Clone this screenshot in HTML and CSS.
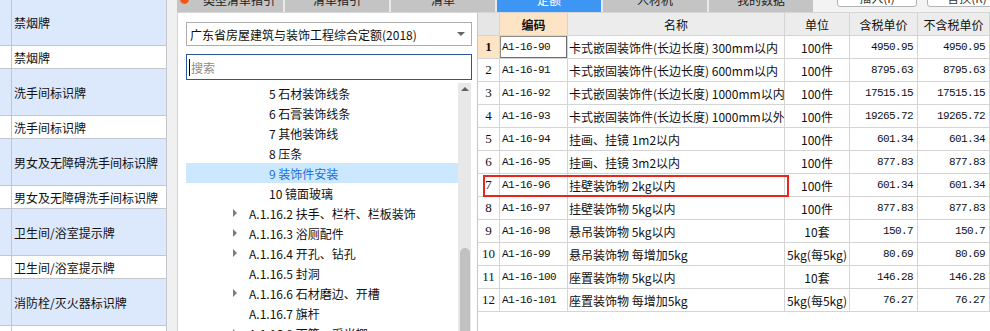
FILE: index.html
```html
<!DOCTYPE html>
<html lang="zh-CN">
<head>
  <meta charset="UTF-8" />
  <title>定额库</title>
  <link rel="stylesheet" href="styles.css">
</head>
<body>
<div class="app">

  <aside class="side">
    <div class="srow tall"><span class="sidx"></span><span class="stxt">禁烟牌</span></div>
    <div class="srow short"><span class="sidx"></span><span class="stxt">禁烟牌</span></div>
    <div class="srow tall"><span class="sidx"></span><span class="stxt">洗手间标识牌</span></div>
    <div class="srow short"><span class="sidx"></span><span class="stxt">洗手间标识牌</span></div>
    <div class="srow tall"><span class="sidx"></span><span class="stxt">男女及无障碍洗手间标识牌</span></div>
    <div class="srow short"><span class="sidx"></span><span class="stxt">男女及无障碍洗手间标识牌</span></div>
    <div class="srow tall"><span class="sidx"></span><span class="stxt">卫生间/浴室提示牌</span></div>
    <div class="srow short"><span class="sidx"></span><span class="stxt">卫生间/浴室提示牌</span></div>
    <div class="srow tall"><span class="sidx"></span><span class="stxt">消防栓/灭火器标识牌</span></div>
    <div class="srow short"><span class="sidx"></span><span class="stxt"></span></div>
  </aside>

  <div class="gutter"></div>

  <main class="main">
    <div class="tabbar">
      <div class="strip">
        <div class="tabs">
          <div class="tab first"><i class="dot"></i>类型清单指引</div>
          <div class="tab">清单指引</div>
          <div class="tab">清单</div>
          <div class="tab on">定额</div>
          <div class="tab">人材机</div>
          <div class="tab">我的数据</div>
        </div>
        <div class="tools">
          <button>插入(I)</button>
          <button>替换(R)</button>
        </div>
      </div>
    </div>

    <div class="body">
      <!-- 定额库 + 章节树 -->
      <section class="lib">
        <div class="select">
          <span>广东省房屋建筑与装饰工程综合定额(2018)</span>
          <i class="caret-down"></i>
        </div>
        <div class="search"><i class="cursor"></i>搜索</div>
        <div class="tree">
          <div class="nodes">
            <div class="node l3">5 石材装饰线条</div>
            <div class="node l3">6 石膏装饰线条</div>
            <div class="node l3">7 其他装饰线</div>
            <div class="node l3">8 压条</div>
            <div class="node l3 sel">9 装饰件安装</div>
            <div class="node l3">10 镜面玻璃</div>
            <div class="node l2"><i class="tri has"></i>A.1.16.2 扶手、栏杆、栏板装饰</div>
            <div class="node l2"><i class="tri has"></i>A.1.16.3 浴厕配件</div>
            <div class="node l2"><i class="tri has"></i>A.1.16.4 开孔、钻孔</div>
            <div class="node l2"><i class="tri"></i>A.1.16.5 封洞</div>
            <div class="node l2"><i class="tri has"></i>A.1.16.6 石材磨边、开槽</div>
            <div class="node l2"><i class="tri"></i>A.1.16.7 旗杆</div>
            <div class="node l2"><i class="tri has"></i>A.1.16.8 雨篷、采光棚</div>
          </div>
          <div class="scroll">
            <i class="up"></i>
            <i class="thumb"></i>
          </div>
        </div>
      </section>

      <!-- 定额子目表 -->
      <section class="grid">
        <div class="row head">
          <div class="num"></div><div class="c">编码</div><div class="n">名称</div><div class="u">单位</div><div class="p">含税单价</div><div class="p">不含税单价</div>
        </div>
        <div class="row cur">
          <div class="num">1</div><div class="c">A1-16-90</div><div class="n">卡式嵌固装饰件(长边长度) 300mm以内</div><div class="u">100件</div><div class="p">4950.95</div><div class="p">4950.95</div>
        </div>
        <div class="row">
          <div class="num">2</div><div class="c">A1-16-91</div><div class="n">卡式嵌固装饰件(长边长度) 600mm以内</div><div class="u">100件</div><div class="p">8795.63</div><div class="p">8795.63</div>
        </div>
        <div class="row">
          <div class="num">3</div><div class="c">A1-16-92</div><div class="n">卡式嵌固装饰件(长边长度) 1000mm以内</div><div class="u">100件</div><div class="p">17515.15</div><div class="p">17515.15</div>
        </div>
        <div class="row">
          <div class="num">4</div><div class="c">A1-16-93</div><div class="n">卡式嵌固装饰件(长边长度) 1000mm以外</div><div class="u">100件</div><div class="p">19265.72</div><div class="p">19265.72</div>
        </div>
        <div class="row">
          <div class="num">5</div><div class="c">A1-16-94</div><div class="n">挂画、挂镜 1m2以内</div><div class="u">100件</div><div class="p">601.34</div><div class="p">601.34</div>
        </div>
        <div class="row">
          <div class="num">6</div><div class="c">A1-16-95</div><div class="n">挂画、挂镜 3m2以内</div><div class="u">100件</div><div class="p">877.83</div><div class="p">877.83</div>
        </div>
        <div class="row">
          <div class="num">7</div><div class="c">A1-16-96</div><div class="n">挂壁装饰物 2kg以内</div><div class="u">100件</div><div class="p">601.34</div><div class="p">601.34</div>
        </div>
        <div class="row">
          <div class="num">8</div><div class="c">A1-16-97</div><div class="n">挂壁装饰物 5kg以内</div><div class="u">100件</div><div class="p">877.83</div><div class="p">877.83</div>
        </div>
        <div class="row">
          <div class="num">9</div><div class="c">A1-16-98</div><div class="n">悬吊装饰物 5kg以内</div><div class="u">10套</div><div class="p">150.7</div><div class="p">150.7</div>
        </div>
        <div class="row">
          <div class="num">10</div><div class="c">A1-16-99</div><div class="n">悬吊装饰物 每增加5kg</div><div class="u">5kg(每5kg)</div><div class="p">80.69</div><div class="p">80.69</div>
        </div>
        <div class="row">
          <div class="num">11</div><div class="c">A1-16-100</div><div class="n">座置装饰物 5kg以内</div><div class="u">10套</div><div class="p">146.28</div><div class="p">146.28</div>
        </div>
        <div class="row">
          <div class="num">12</div><div class="c">A1-16-101</div><div class="n">座置装饰物 每增加5kg</div><div class="u">5kg(每5kg)</div><div class="p">76.27</div><div class="p">76.27</div>
        </div>

        <div class="mark"></div>
      </section>
    </div>
  </main>

</div>
</body>
</html>
```

FILE: styles.css
```css
/* ─── Reset & Body ───────────────────────────────────────────────────────── */
* { box-sizing: border-box; margin: 0; padding: 0; }
body {
  width: 990px;
  height: 331px;
  overflow: hidden;
  background: #f0f0f0;
  font: 12px "Noto Sans CJK SC", sans-serif;
  color: #111;
}
i { display: block; font-style: normal; }

.app { display: flex; height: 331px; }

/* ─── Left list ──────────────────────────────────────────────────────────── */
.side {
  width: 167px;
  flex: none;
  background: #fff;
  border-right: 1px solid #c3c7cd;
  overflow: hidden;
}
.srow { display: flex; border-bottom: 1px solid #c3c7cd; }
.srow:first-child { margin-top: -1px; }
.srow.tall { height: 47px; background: #dce8fb; }
.srow.short { height: 23px; background: #fff; }
.sidx { width: 12px; flex: none; border-right: 1px solid #c3c7cd; }
.stxt {
  display: flex;
  align-items: center;
  padding-left: 2px;
  white-space: nowrap;
}

.gutter { width: 10px; flex: none; background: #f0f0f0; }

/* ─── Main ───────────────────────────────────────────────────────────────── */
.main { flex: 1; min-width: 0; display: flex; flex-direction: column; }

.tabbar { height: 12px; flex: none; overflow: hidden; }
.strip { height: 24px; margin-top: -12px; display: flex; }
.tabs { display: flex; gap: 2px; background: #e9e9e9; }
.tab {
  width: 104px;
  background: #c4c4c4;
  display: flex;
  align-items: center;
  justify-content: center;
  line-height: 24px;
  color: #222;
}
.tab.first { width: 106px; justify-content: flex-start; padding-left: 3px; }
.tab.on { background: #3d95f4; color: #fff; }
.dot {
  width: 9px;
  height: 10px;
  border-radius: 50%;
  background: #f0561a;
  margin: 0 14px 2px 0;
}
.tools {
  flex: 1;
  display: flex;
  gap: 10px;
  align-items: flex-end;
  padding: 0 0 5px 24px;
  background: #f3f3f3;
}
.tools button {
  width: 80px;
  height: 20px;
  flex: none;
  background: #fff;
  border: 1px solid #b4b4b4;
  border-radius: 3px;
  font: 12px "Noto Sans CJK SC", sans-serif;
  color: #333;
}

.body {
  flex: 1;
  min-height: 0;
  display: flex;
  border-top: 1px solid #d6d6d6;
}

/* ─── Library tree ───────────────────────────────────────────────────────── */
.lib {
  width: 301px;
  flex: none;
  background: #fff;
  border-left: 1px solid #d2d2d2;
  border-right: 1px solid #c6c6c6;
  padding: 9px 5px 0 8px;
  display: flex;
  flex-direction: column;
}
.select {
  height: 24px;
  flex: none;
  border: 1px solid #adadad;
  display: flex;
  align-items: center;
  justify-content: space-between;
  padding: 0 6px 0 3px;
  white-space: nowrap;
}
.caret-down {
  width: 0;
  height: 0;
  border-left: 4px solid transparent;
  border-right: 4px solid transparent;
  border-top: 4px solid #666;
}
.search {
  height: 26px;
  flex: none;
  margin-top: 8px;
  border: 1px solid #2b5797;
  display: flex;
  align-items: center;
  padding-left: 2px;
  color: #8c8c8c;
}
.cursor { width: 1px; height: 17px; background: #000; margin-right: 1px; }

.tree { flex: 1; min-height: 0; margin-top: 3px; display: flex; }
.nodes { flex: 1; overflow: hidden; }
.node {
  height: 20px;
  display: flex;
  align-items: center;
  white-space: nowrap;
}
.node.l3 { padding-left: 83px; }
.node.l2 { padding-left: 47px; }
.node.sel { background: #cce8ff; color: #1b6fd8; }
.tri { width: 16px; flex: none; }
.tri.has::before {
  content: "";
  display: block;
  width: 0;
  height: 0;
  border-left: 4px solid #7c7c7c;
  border-top: 4px solid transparent;
  border-bottom: 4px solid transparent;
}
.scroll {
  width: 13px;
  flex: none;
  margin-right: 1px;
  background: #e8e8e8;
  display: flex;
  flex-direction: column;
  align-items: center;
}
.up {
  width: 0;
  height: 0;
  margin-top: 4px;
  border-left: 4px solid transparent;
  border-right: 4px solid transparent;
  border-bottom: 4px solid #606060;
}
.thumb {
  width: 10px;
  height: 83px;
  margin-top: auto;
  background: #c1c1c1;
  border-radius: 5px 5px 0 0;
}

/* ─── Grid ───────────────────────────────────────────────────────────────── */
.grid { flex: 1; position: relative; overflow: hidden; background: #fff; }
.row {
  display: grid;
  grid-template-columns: 22px 68px 217px 65px 68px 1fr;
  height: 23px;
}
.row > div {
  display: flex;
  align-items: center;
  white-space: nowrap;
  overflow: hidden;
  border-right: 1px solid #d4d4d4;
  border-bottom: 1px solid #d4d4d4;
}
.row .num {
  justify-content: center;
  font: 13px "Liberation Serif", serif;
}
.row .c {
  padding-left: 2px;
  font: 11px "Liberation Mono", monospace;
  letter-spacing: -0.6px;
}
.row .n { padding-left: 1px; }
.row .u { justify-content: center; }
.row .p {
  justify-content: flex-end;
  padding-right: 4px;
  font: 11px "Liberation Mono", monospace;
  letter-spacing: -0.6px;
}

.head > div { background: #ececec; justify-content: center; }
.row.head > div { font: 12px "Noto Sans CJK SC", sans-serif; letter-spacing: 0; justify-content: center; padding: 0; }
.head .num { background: #e6e6e6; }
.row.head .c { background: #fde4c4; font-weight: bold; }

.cur .num { background: #fde4c4; font-weight: bold; }
.cur .c { box-shadow: inset -1px -1px 0 #6e6e6e, inset 0 0 0 1px #8c8c8c; }

/* annotation box over row 7 */
.mark {
  position: absolute;
  left: 5px;
  top: 162px;
  width: 306px;
  height: 22px;
  border: 2px solid #e8261c;
}
```
